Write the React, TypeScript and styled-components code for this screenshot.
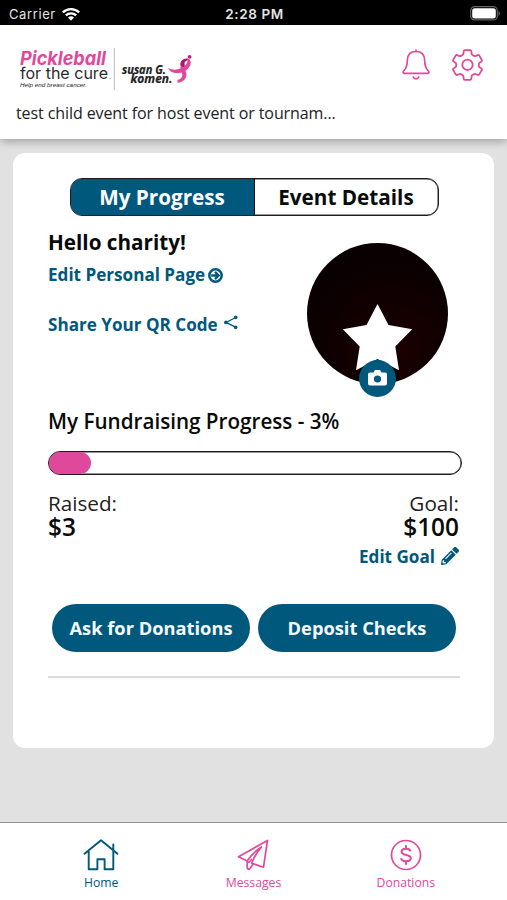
import React from "react";
import styled, { createGlobalStyle } from "styled-components";
import { FaPencilAlt } from "react-icons/fa";

const BLUE = "#00587c";
const PINK = "#e0499b";

const GlobalStyle = createGlobalStyle`
  * { box-sizing: border-box; }
  body { margin: 0; background: #e1e1e1; }
  svg { display: block; flex: none; }
  button { font: inherit; border: 0; background: none; padding: 0; margin: 0; }
`;

const Screen = styled.div`
  width: 507px;
  height: 900px;
  display: flex;
  flex-direction: column;
  overflow: hidden;
  background: #e1e1e1;
  color: #0a0a0a;
  font-family: "Open Sans", sans-serif;
`;

const StatusBar = styled.div`
  flex: none;
  height: 25px;
  display: grid;
  grid-template-columns: 1fr auto 1fr;
  align-items: center;
  padding: 2px 6px 0 9px;
  background: #000;
  color: #e4e4e4;
  font-family: Inter, sans-serif;
  font-size: 13px;
  line-height: 20px;
`;

const Carrier = styled.div`
  display: flex;
  align-items: center;
  gap: 6px;
  letter-spacing: 0.6px;
`;

const Clock = styled.div`
  margin-right: 1px;
  font-weight: 600;
  font-size: 13.5px;
  letter-spacing: 0.6px;
`;

const BatterySlot = styled.div`
  justify-self: end;
`;

const Header = styled.header`
  flex: none;
  height: 114px;
  padding: 20px 24px 0 16px;
  background: #fff;
  box-shadow: 0 2px 9px rgba(0, 0, 0, 0.32);
`;

const HeaderTop = styled.div`
  display: flex;
  justify-content: space-between;
  height: 52px;
`;

const HeaderActions = styled.div`
  display: flex;
  gap: 22px;
`;

const IconButton = styled.button`
  height: 32px;
  margin-top: 4px;
`;

const EventName = styled.div`
  margin-top: 5px;
  font-size: 16px;
  line-height: 22px;
  letter-spacing: -0.09px;
  white-space: nowrap;
  color: #222;
`;

const Card = styled.main`
  flex: none;
  width: 481px;
  height: 595px;
  margin: 14px 0 0 13px;
  padding: 25px 34px 0 35px;
  border-radius: 12px;
  background: #fff;
`;

const Tabs = styled.div`
  display: flex;
  width: 369px;
  height: 38px;
  margin-left: 21.5px;
  border: 1px solid #1c1c1c;
  box-shadow: inset 0 0 0 0.5px #333;
  border-radius: 12px;
  overflow: hidden;
`;

const Tab = styled.button<{ $active?: boolean }>`
  flex: 1;
  font-size: 20.7px;
  font-weight: 700;
  line-height: 34px;
  color: ${(p) => (p.$active ? "#fff" : "#0a0a0a")};
  background: ${(p) => (p.$active ? BLUE : "transparent")};
  border-right: ${(p) => (p.$active ? "1px solid #111" : "0")};
`;

const Profile = styled.section`
  display: flex;
  justify-content: space-between;
  height: 187px;
  padding-right: 12px;
`;

const ProfileText = styled.div`
  padding-top: 12px;
`;

const Greeting = styled.h1`
  margin: 0;
  font-size: 20.7px;
  line-height: 28px;
  font-weight: 700;
`;

const TextLink = styled.button<{ $top: number; $gap: number }>`
  display: flex;
  align-items: center;
  gap: ${(p) => p.$gap}px;
  margin-top: ${(p) => p.$top}px;
  font-size: 17.1px;
  line-height: 24px;
  font-weight: 700;
  color: ${BLUE};
  white-space: nowrap;
`;

const ShareSlot = styled.span`
  padding-bottom: 6px;
`;

const PencilSlot = styled.span`
  padding-bottom: 2px;
`;

const Avatar = styled.div`
  position: relative;
  width: 141px;
  height: 141px;
  margin-top: 27px;
  border-radius: 50%;
  background: radial-gradient(circle at 60% 75%, #1c0001, #0c0001 55%, #070001);
`;

const StarShape = styled.svg`
  position: absolute;
  left: 35px;
  top: 60px;
`;

const CameraBadge = styled.button`
  position: absolute;
  left: 52px;
  top: 117px;
  width: 37px;
  height: 37px;
  display: flex;
  align-items: center;
  justify-content: center;
  padding-bottom: 2px;
  border-radius: 50%;
  background: ${BLUE};
  color: #fff;
`;

const ProgressTitle = styled.h2`
  margin: 4px 0 0;
  font-size: 20.65px;
  line-height: 28px;
  font-weight: 600;
  white-space: nowrap;
`;

const Track = styled.div`
  width: 414px;
  height: 24px;
  margin-top: 16px;
  border: 1px solid #1c1c1c;
  box-shadow: inset 0 0 0 0.5px #333;
  border-radius: 12px;
`;

const Fill = styled.div`
  width: 42px;
  height: 100%;
  border-radius: 11px;
  background: ${PINK};
`;

const Totals = styled.section`
  display: flex;
  justify-content: space-between;
  height: 129px;
  padding: 16px 1px 0 0;
`;

const Total = styled.div<{ $end?: boolean }>`
  display: flex;
  flex-direction: column;
  align-items: ${(p) => (p.$end ? "flex-end" : "flex-start")};
`;

const TotalLabel = styled.div`
  font-size: 20.7px;
  line-height: 25px;
  color: #222;
`;

const Amount = styled.div`
  font-size: 24.4px;
  line-height: 22px;
  font-weight: 600;
`;

const Buttons = styled.div`
  display: flex;
  gap: 8px;
  padding-left: 4px;
`;

const PillButton = styled.button`
  width: 198px;
  height: 48px;
  padding-bottom: 2px;
  border-radius: 24px;
  background: ${BLUE};
  color: #f4fafc;
  font-size: 18.3px;
  font-weight: 700;
  white-space: nowrap;
`;

const Rule = styled.hr`
  height: 2px;
  margin: 24px 0 0;
  border: 0;
  background: #d9dbdc;
`;

const NavBar = styled.nav`
  flex: none;
  display: flex;
  height: 78px;
  margin-top: auto;
  padding: 16px 25px 0;
  border-top: 1px solid #929292;
  background: #fff;
`;

const NavItem = styled.button<{ $color: string }>`
  flex: 1;
  display: flex;
  flex-direction: column;
  align-items: center;
  color: ${(p) => p.$color};
  font-size: 12.2px;
  line-height: 18px;
`;

const NavLabel = styled.span`
  margin-top: 3px;
`;

const Wifi = () => (
  <svg width="18" height="14" viewBox="0 0 18 14" fill="#fff">
    <path d="M0 4.5A13 13 0 0 1 18 4.5L16.3 6.3A10.5 10.5 0 0 0 1.7 6.3Z" />
    <path d="M3 7.6A8.7 8.7 0 0 1 15 7.6L13.3 9.3A6.3 6.3 0 0 0 4.7 9.3Z" />
    <path d="M6 10.6A4.4 4.4 0 0 1 12 10.6L9 13.7Z" />
  </svg>
);

const Battery = () => (
  <svg width="31" height="15" viewBox="0 0 31 15">
    <rect x="0.7" y="0.7" width="26.6" height="13.2" rx="4" fill="none" stroke="#666" strokeWidth="1.2" />
    <rect x="2.2" y="2.2" width="23.6" height="10.2" rx="2.5" fill="#fff" />
    <path d="M28.6 5v5c1.7-.8 1.7-4.2 0-5z" fill="#666" />
  </svg>
);

const Logo = () => (
  <svg width="180" height="50" viewBox="0 0 180 50">
    <text x="4" y="20" fontFamily="Inter, sans-serif" fontSize="19" fontWeight="700" fontStyle="italic" fill={PINK} textLength="86" lengthAdjust="spacingAndGlyphs">Pickleball</text>
    <text x="4" y="34.300" fontFamily="Inter, sans-serif" fontSize="15.500" fill="#2b2b2b" textLength="88" lengthAdjust="spacingAndGlyphs">for the cure</text>
    <text x="4" y="42" fontFamily="Liberation Sans, sans-serif" fontSize="5.500" fontStyle="italic" fill="#222" textLength="67" lengthAdjust="spacingAndGlyphs">Help end breast cancer.</text>
    <circle cx="94" cy="33.500" r=".6" fill="#888" />
    <path d="M98.300 3v42" stroke="#bbb" strokeWidth="1" />
    <g fontFamily="Open Sans, sans-serif" fontSize="11.500" fontWeight="700" fontStyle="italic" fill="#222" stroke="#222" strokeWidth=".2">
      <text x="106" y="28.500" textLength="44" lengthAdjust="spacingAndGlyphs">susan G.</text>
      <text x="114.500" y="38" textLength="42" lengthAdjust="spacingAndGlyphs">komen.</text>
    </g>
    <path d="M164.800 21.500C163 17 167 12.500 172 13.800l1.800 1.400c-3.300-.4-5.300.8-5.300 3.600 0 2 1 3.200 1.600 4.600z" fill="#a51b66" />
    <path d="M171.200 13.600c3.300.4 4.300 3.400 3 6.600-2.200 5.200-7.700 8-13.200 8-4.500 0-7.700-2.200-9-5.200 4.200 2.300 8.800 2 12.500.5 4-1.600 6.700-4.600 7-7.700.1-1-.2-1.700-.3-2.200z" fill={PINK} />
    <path d="M165.200 20.500c1.500 3 5 4.300 5.300 8.500.3 5.200-4.200 8.200-9 9 .3-1 .2-2.200-.2-3 3.600-.7 5.200-2.500 5-5.200-.2-2.600-2-4.800-1.900-7.300z" fill={PINK} />
    <circle cx="173.600" cy="11.800" r="1.900" fill="#b8257a" />
  </svg>
);

const Bell = () => (
  <svg width="28" height="32" viewBox="0 0 28 32" fill="none" stroke={PINK} strokeWidth="1.7" strokeLinecap="round" strokeLinejoin="round">
    <path d="M14 1v1.500M14 2.500C8.300 2.500 5.600 6 5.400 11c-.2 6-.9 8.500-3.500 10.700-1.600 1.600-.9 2.700.8 2.700h22.600c1.700 0 2.400-1.100.8-2.700-2.600-2.200-3.300-4.700-3.500-10.700C22.400 6 19.700 2.500 14 2.500z" />
    <path d="M11.200 28c1.200 2.600 4.400 2.600 5.600 0" />
  </svg>
);

const Gear = () => (
  <svg width="31" height="32" viewBox="0 0 31 32" fill="none" stroke={PINK} strokeWidth="1.800" strokeLinejoin="round">
    <path d="M12.800 1.200h5.400q1 0 1.100 1l.3 2.400q.1 1 1 1.400l1.500.9q.9.500 1.700.1l2-.9q1-.4 1.500.5l2.500 4.300q.5.900-.3 1.500l-1.900 1.400q-.8.600-.8 1.500v1.400q0 .9.800 1.500l1.900 1.400q.8.600.3 1.500l-2.500 4.300q-.5.900-1.500.5l-2-.9q-.8-.4-1.700.1l-1.500.9q-.9.400-1 1.400l-.3 2.400q-.1 1-1.100 1h-5.400q-1 0-1.100-1l-.3-2.400q-.1-1-1-1.400l-1.500-.9q-.9-.5-1.700-.1l-2 .9q-1 .4-1.500-.5l-2.500-4.300q-.5-.9.300-1.500l1.900-1.400q.8-.6.800-1.500v-1.400q0-.9-.8-1.500l-1.900-1.400q-.8-.6-.3-1.500l2.500-4.300q.5-.9 1.500-.5l2 .9q.8.400 1.700-.1l1.500-.9q.9-.4 1-1.400l.3-2.400q.1-1 1.100-1z" />
    <circle cx="15.500" cy="15.800" r="5.200" />
  </svg>
);

const ArrowCircle = () => (
  <svg width="15" height="15" viewBox="0 0 15 15" fill="none" stroke={BLUE}>
    <circle cx="7.500" cy="7.500" r="6.200" strokeWidth="2.500" />
    <path d="M3.200 7.500h7M7 3.900l3.600 3.600L7 11.100" strokeWidth="2.300" />
  </svg>
);

const Share = () => (
  <svg width="14" height="15" viewBox="0 0 14 15" fill={BLUE}>
    <path d="M11.500 2.500L2.200 7.400l9.300 4.800" fill="none" stroke={BLUE} strokeWidth="1.300" />
    <circle cx="11.700" cy="2.400" r="1.800" />
    <circle cx="2" cy="7.400" r="1.900" />
    <circle cx="11.700" cy="12.400" r="1.800" />
  </svg>
);

const Camera = () => (
  <svg width="19" height="16" viewBox="0 0 19 16">
    <path d="M2 2.600h3.600l.7-1.700Q6.600 0 7.500 0h4q.9 0 1.200.9l.7 1.700H17q2 0 2 2v9q0 2-2 2H2q-2 0-2-2v-9q0-2 2-2z" fill="#fff" />
    <circle cx="9.500" cy="9" r="3.600" fill={BLUE} />
  </svg>
);

const House = () => (
  <svg width="36" height="32" viewBox="0 0 36 32" fill="none" stroke="currentColor" strokeWidth="1.900" strokeLinejoin="round" strokeLinecap="round">
    <path d="M1.500 14.800L18 1.300l16.500 13.500M5.700 11.800v18.400h8.700V20.300h7.200v9.900h8.700V5.500" />
  </svg>
);

const Plane = () => (
  <svg width="32" height="32" viewBox="0 0 32 32" fill="none" stroke="currentColor" strokeWidth="1.700" strokeLinejoin="round" strokeLinecap="round">
    <path d="M30.500 1.400L1.500 17.800l8.700 4.200C14 16 19 11.500 24.500 8c-4 4.500-7.500 9.500-9.800 16.200l11.800 4z" />
    <path d="M10.200 22v6.500c0 1.800 1.700 2.300 2.700.9l3.200-4.300M10.200 22c.5 2.500 3 .8 4.200-1.600" />
  </svg>
);

const Dollar = () => (
  <svg width="32" height="32" viewBox="0 0 32 32" fill="none" stroke="currentColor" strokeWidth="1.700">
    <circle cx="16" cy="16" r="14.500" />
    <path d="M16 6.300v3.500M16 22.300v3.500M20.500 12.400c-.3-1.600-2-2.600-4.500-2.600s-4.400 1.100-4.400 3c0 4.400 9.200 1.900 9.200 6.300 0 2-2 3.200-4.800 3.200-2.700 0-4.600-1.200-4.900-3.100" strokeWidth="2" />
  </svg>
);

export default function App() {
  return (
    <>
      <GlobalStyle />
      <Screen>
        <StatusBar>
          <Carrier>Carrier <Wifi /></Carrier>
          <Clock>2:28 PM</Clock>
          <BatterySlot><Battery /></BatterySlot>
        </StatusBar>
        <Header>
          <HeaderTop>
            <Logo />
            <HeaderActions>
              <IconButton aria-label="Notifications"><Bell /></IconButton>
              <IconButton aria-label="Settings"><Gear /></IconButton>
            </HeaderActions>
          </HeaderTop>
          <EventName>test child event for host event or tournam...</EventName>
        </Header>
        <Card>
          <Tabs>
            <Tab $active>My Progress</Tab>
            <Tab>Event Details</Tab>
          </Tabs>
          <Profile>
            <ProfileText>
              <Greeting>Hello charity!</Greeting>
              <TextLink $top={7} $gap={3}>Edit Personal Page<ArrowCircle /></TextLink>
              <TextLink $top={26} $gap={6}>Share Your QR Code<ShareSlot><Share /></ShareSlot></TextLink>
            </ProfileText>
            <Avatar>
              <StarShape width="71" height="70" viewBox="0 0 71 70" fill="#fff">
                <path d="M35.500 1L46.500 22l23.700 4.300L53.300 43.500 57 67.300 35.500 56 14 67.300l3.700-23.800L.8 26.300 24.500 22z" />
              </StarShape>
              <CameraBadge aria-label="Change photo"><Camera /></CameraBadge>
            </Avatar>
          </Profile>
          <ProgressTitle>My Fundraising Progress - 3%</ProgressTitle>
          <Track><Fill /></Track>
          <Totals>
            <Total>
              <TotalLabel>Raised:</TotalLabel>
              <Amount>$3</Amount>
            </Total>
            <Total $end>
              <TotalLabel>Goal:</TotalLabel>
              <Amount>$100</Amount>
              <TextLink $top={7} $gap={6}>Edit Goal<PencilSlot><FaPencilAlt size={18} /></PencilSlot></TextLink>
            </Total>
          </Totals>
          <Buttons>
            <PillButton>Ask for Donations</PillButton>
            <PillButton>Deposit Checks</PillButton>
          </Buttons>
          <Rule />
        </Card>
        <NavBar>
          <NavItem $color={BLUE}><House /><NavLabel>Home</NavLabel></NavItem>
          <NavItem $color={PINK}><Plane /><NavLabel>Messages</NavLabel></NavItem>
          <NavItem $color={PINK}><Dollar /><NavLabel>Donations</NavLabel></NavItem>
        </NavBar>
      </Screen>
    </>
  );
}
